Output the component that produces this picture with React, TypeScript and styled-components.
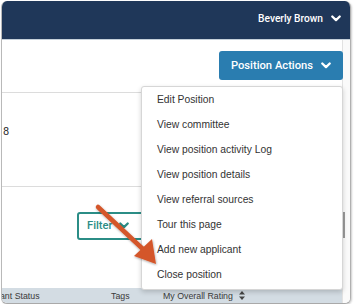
import React from "react";
import styled, { createGlobalStyle } from "styled-components";

const Global = createGlobalStyle`
  html, body { margin: 0; padding: 0; background: #ffffff; }
  body { font-family: "Liberation Sans", Arial, sans-serif; color: #333333; }
  * { box-sizing: border-box; }
`;

const Window = styled.div`
  margin: 1px 0 0 1px;
  width: 350px;
  height: 303px;
  border-radius: 6px;
  overflow: hidden;
  background: #fff;
  border-left: 1px solid #b9b9b9;
  border-right: 1px solid #b0b0b0;
  border-bottom: 1px solid #a9a9a9;
  box-shadow: 1px 1px 2px rgba(0, 0, 0, 0.2);
  display: flex;
  flex-direction: column;
  position: relative;
`;

const Header = styled.div`
  height: 39px;
  flex: none;
  background: #1f3759;
  border-bottom: 1px solid #c5d0da;
  display: flex;
  align-items: center;
  justify-content: flex-end;
  padding: 0 9px 3px 0;
  gap: 8px;
  color: #fff;
  font-family: Roboto, "Liberation Sans", sans-serif;
  font-size: 10.2px;
  font-weight: 500;
`;

const Body = styled.div`
  flex: 1;
  display: flex;
  min-height: 0;
`;

const Main = styled.div`
  flex: 1;
  display: flex;
  flex-direction: column;
  position: relative;
  min-width: 0;
`;

const ScrollTrack = styled.div`
  width: 8px;
  flex: none;
  border-left: 1px solid #e2e2e2;
  background: #fafafa;
  padding-top: 172px;
`;

const ScrollThumb = styled.div`
  width: 2px;
  height: 26px;
  background: #9a9a9a;
`;

const Toolbar = styled.div`
  height: 53px;
  flex: none;
  display: flex;
  justify-content: flex-end;
  align-items: flex-start;
  padding-top: 11px;
  border-bottom: 1px solid #dcdcdc;
`;

const PrimaryButton = styled.div`
  width: 124px;
  height: 29px;
  margin-right: -1px;
  background: #2a7db0;
  border-radius: 3px;
  color: #fff;
  font-family: Roboto, "Liberation Sans", sans-serif;
  font-size: 11.2px;
  font-weight: 500;
  display: flex;
  align-items: center;
  justify-content: center;
  gap: 8px;
  padding-bottom: 1px;
`;

const InfoRow = styled.div`
  height: 94px;
  flex: none;
  border-bottom: 1px solid #dcdcdc;
  padding: 32px 0 0 1px;
  font-family: Roboto, "Liberation Sans", sans-serif;
  font-size: 11px;
  line-height: 14px;
  color: #2e2e2e;
`;

const FilterArea = styled.div`
  flex: 1;
  padding: 25px 0 0 75px;
`;

const OutlineButton = styled.div`
  width: 72px;
  height: 28px;
  border: 2px solid #2b8d86;
  border-radius: 3px;
  color: #2b8d86;
  font-family: Roboto, "Liberation Sans", sans-serif;
  font-size: 11.2px;
  font-weight: 500;
  display: flex;
  align-items: center;
  padding: 0 0 1px 8px;
  gap: 6px;
`;

const TableHead = styled.div`
  height: 15px;
  flex: none;
  background: #d3dce3;
  display: flex;
  align-items: center;
  font-size: 8.8px;
  color: #3a3a3a;
  white-space: nowrap;
  overflow: hidden;
`;

const HeadCell = styled.div<{ $w: number; $ml?: number }>`
  width: ${(p) => p.$w}px;
  margin-left: ${(p) => p.$ml ?? 0}px;
  flex: none;
  display: flex;
  align-items: center;
  gap: 6px;
`;

const Menu = styled.div`
  position: absolute;
  top: 46px;
  left: 139px;
  width: 202px;
  background: #fff;
  border: 1px solid #d6d6d6;
  border-radius: 3px;
  box-shadow: 0 2px 5px rgba(0, 0, 0, 0.18);
  padding: 0 0 2px;
  z-index: 2;
`;

const MenuItem = styled.div`
  height: 25px;
  display: flex;
  align-items: center;
  padding-left: 15px;
  font-size: 10.3px;
  color: #333;
`;

const ArrowLayer = styled.svg`
  position: absolute;
  left: 0;
  top: 0;
  width: 354px;
  height: 307px;
  pointer-events: none;
  z-index: 3;
`;

const Chevron = ({ size = 10, color = "#fff" }: { size?: number; color?: string }) => (
  <svg width={size} height={size * 0.7} viewBox="0 0 10 7">
    <polyline points="1.3,1.5 5,5.1 8.7,1.5" fill="none" stroke={color} strokeWidth="2.3" strokeLinecap="round" strokeLinejoin="round" />
  </svg>
);

const SortIcon = () => (
  <svg width="6" height="9" viewBox="0 0 6 9">
    <polygon points="3,0 6,3.5 0,3.5" fill="#444" />
    <polygon points="0,5.5 6,5.5 3,9" fill="#444" />
  </svg>
);

const items = [
  "Edit Position",
  "View committee",
  "View position activity Log",
  "View position details",
  "View referral sources",
  "Tour this page",
  "Add new applicant",
  "Close position",
];

export default function App() {
  return (
    <>
      <Global />
      <Window>
        <Header>
          <span>Beverly Brown</span>
          <Chevron />
        </Header>
        <Body>
          <Main>
            <Toolbar>
              <PrimaryButton>
                <span>Position Actions</span>
                <Chevron />
              </PrimaryButton>
            </Toolbar>
            <InfoRow>8</InfoRow>
            <FilterArea>
              <OutlineButton>
                <span>Filter</span>
                <Chevron color="#2b8d86" />
              </OutlineButton>
            </FilterArea>
            <TableHead>
              <HeadCell $w={135} $ml={-26}>Applicant Status</HeadCell>
              <HeadCell $w={52}>Tags</HeadCell>
              <HeadCell $w={100}>
                <span>My Overall Rating</span>
                <SortIcon />
              </HeadCell>
            </TableHead>
            <Menu>
              {items.map((t) => (
                <MenuItem key={t}>{t}</MenuItem>
              ))}
            </Menu>
          </Main>
          <ScrollTrack>
            <ScrollThumb />
          </ScrollTrack>
        </Body>
      </Window>
      <ArrowLayer viewBox="0 0 354 307">
        <defs>
          <filter id="sh" x="-20%" y="-20%" width="140%" height="140%">
            <feDropShadow dx="0.5" dy="1" stdDeviation="0.8" floodColor="#000" floodOpacity="0.35" />
          </filter>
        </defs>
        <g filter="url(#sh)" fill="#d4562a">
          <line x1="98" y1="207" x2="145" y2="251" stroke="#d4562a" strokeWidth="4.5" strokeLinecap="round" />
          <polygon points="156,264 134,256 152,239" />
        </g>
      </ArrowLayer>
    </>
  );
}
